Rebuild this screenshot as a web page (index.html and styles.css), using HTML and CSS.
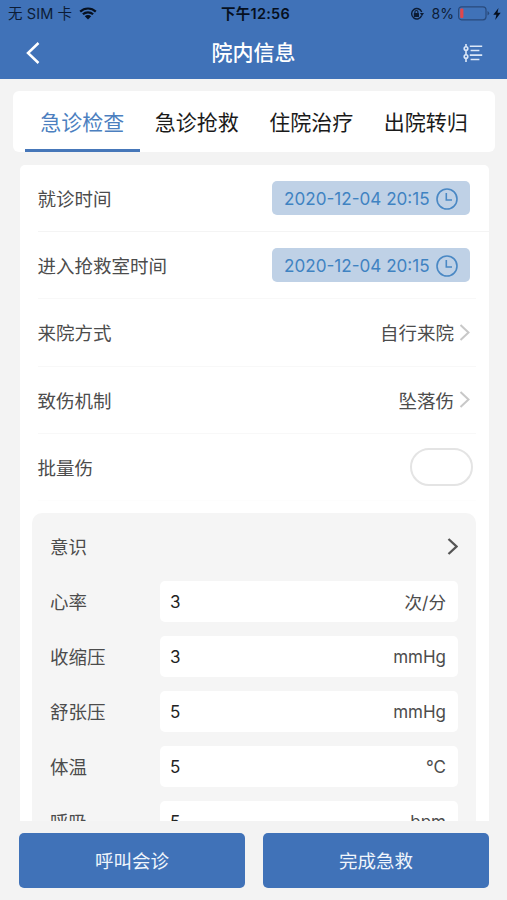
FILE: index.html
```html
<!DOCTYPE html>
<html lang="zh-CN">
<head>
<meta charset="utf-8">
<title>院内信息</title>
<link rel="stylesheet" href="styles.css">
</head>
<body>
<div class="app">
  <header class="header">
    <div class="status">
      <div class="status-left">
        <span>无 SIM 卡</span>
        <svg class="wifi" width="18" height="13" viewBox="0 0 18 13"><path d="M1.2 4.6A11.3 11.3 0 0 1 16.8 4.6M3.9 7.3A7.5 7.5 0 0 1 14.1 7.3" fill="none" stroke="#06101f" stroke-width="2.2"/><path d="M9 12.6L5.8 9.3A4.6 4.6 0 0 1 12.2 9.3Z" fill="#06101f"/></svg>
      </div>
      <div class="status-time">下午12:56</div>
      <div class="status-right">
        <svg width="14" height="14" viewBox="0 0 14 14"><path d="M11.7 8.6A5.2 5.2 0 1 1 11.7 4.9" fill="none" stroke="#0c1c35" stroke-width="1.4"/><path d="M9.9 6.1H14L12 9Z" fill="#0c1c35"/><rect x="3.8" y="6" width="5.2" height="4" rx=".5" fill="#0c1c35"/><path d="M4.9 6V5A1.5 1.5 0 0 1 7.9 5V6" fill="none" stroke="#0c1c35" stroke-width="1.1"/></svg>
        <span class="percent">8%</span>
        <svg class="battery" width="32" height="15" viewBox="0 0 32 15"><rect x=".6" y=".8" width="27.4" height="13" rx="3" fill="none" stroke="#284a7c" stroke-width="1.2"/><rect x="2.2" y="2.5" width="3.2" height="9.6" rx="1" fill="#e0474d"/><path d="M29.5 5v4.5q1.7-.6 1.7-2.2T29.5 5" fill="#284a7c"/></svg>
        <svg width="8" height="12" viewBox="0 0 8 12"><path d="M5.5 0L.3 6.8H3.4L2.2 12L7.7 4.8H4.5Z" fill="#06101f"/></svg>
      </div>
    </div>
    <div class="nav">
      <svg width="14" height="22" viewBox="0 0 14 22"><path d="M12.5 1L2 11L12.5 21" fill="none" stroke="#fff" stroke-width="2.5"/></svg>
      <h1 class="title">院内信息</h1>
      <svg width="20" height="18" viewBox="0 0 20 18"><g fill="none" stroke="#dce8f8" stroke-width="1.6"><path d="M3 0V2.8M3 6.2V10.8M3 14.4V18M6.8 2.2H19.2M7.6 6.5H16.4M6.8 11.1H19.2M7.6 15.5H16.4"/><circle cx="3" cy="4.5" r="1.8"/><circle cx="3" cy="12.6" r="1.8"/></g></svg>
    </div>
  </header>

  <nav class="tabs">
    <div class="tab active">急诊检查</div>
    <div class="tab">急诊抢救</div>
    <div class="tab">住院治疗</div>
    <div class="tab">出院转归</div>
  </nav>

  <main class="card">
    <div class="row strong"><span>就诊时间</span>
      <div class="date"><span>2020-12-04 20:15</span><svg width="22" height="22" viewBox="0 0 22 22"><g fill="none" stroke="#4a88c4" stroke-width="1.6"><circle cx="11" cy="11" r="10"/><path d="M10.3 5V12H16"/></g></svg></div>
    </div>
    <div class="row"><span>进入抢救室时间</span>
      <div class="date"><span>2020-12-04 20:15</span><svg width="22" height="22" viewBox="0 0 22 22"><g fill="none" stroke="#4a88c4" stroke-width="1.6"><circle cx="11" cy="11" r="10"/><path d="M10.3 5V12H16"/></g></svg></div>
    </div>
    <div class="row"><span>来院方式</span>
      <div class="choice"><span>自行来院</span><svg width="11" height="17" viewBox="0 0 11 17"><path d="M1.5 1L9.5 8.5L1.5 16" fill="none" stroke="#c8c8c8" stroke-width="2"/></svg></div>
    </div>
    <div class="row"><span>致伤机制</span>
      <div class="choice"><span>坠落伤</span><svg width="11" height="17" viewBox="0 0 11 17"><path d="M1.5 1L9.5 8.5L1.5 16" fill="none" stroke="#c8c8c8" stroke-width="2"/></svg></div>
    </div>
    <div class="row last"><span>批量伤</span><div class="switch"></div></div>

    <section class="panel">
      <div class="panel-head"><span>意识</span><svg width="11" height="17" viewBox="0 0 11 17"><path d="M1.5 1L9.5 8.5L1.5 16" fill="none" stroke="#555" stroke-width="2.3"/></svg></div>
      <div class="field"><span>心率</span><div class="input"><span>3</span><span class="unit cjk">次/分</span></div></div>
      <div class="field"><span>收缩压</span><div class="input"><span>3</span><span class="unit">mmHg</span></div></div>
      <div class="field"><span>舒张压</span><div class="input"><span>5</span><span class="unit">mmHg</span></div></div>
      <div class="field"><span>体温</span><div class="input"><span>5</span><span class="unit">°C</span></div></div>
      <div class="field"><span>呼吸</span><div class="input"><span>5</span><span class="unit">bpm</span></div></div>
    </section>
  </main>

  <footer class="actions">
    <div class="button">呼叫会诊</div>
    <div class="button">完成急救</div>
  </footer>
</div>
</body>
</html>
```
FILE: styles.css
```css
* { box-sizing: border-box; }

body {
  margin: 0;
  background: #f3f3f3;
  color: #4c4c4c;
  font-family: Inter, "Noto Sans CJK SC", sans-serif;
  font-size: 18.5px;
}

svg { display: block; flex: none; }

.app {
  width: 507px;
  height: 900px;
  display: flex;
  flex-direction: column;
  overflow: hidden;
}

.header {
  flex: none;
  height: 79px;
  background: #4072b8;
}

.status {
  height: 27px;
  padding: 0 6px 0 8px;
  display: grid;
  grid-template-columns: 1fr auto 1fr;
  align-items: center;
  color: #0c1c35;
  font-size: 14.5px;
  line-height: 27px;
}

.status-left,
.status-right { display: flex; align-items: center; }

.status-left { gap: 7px; letter-spacing: .1px; }
.status-right { justify-content: flex-end; }
.status-time { padding-left: 2px; color: #06101f; font-weight: 600; letter-spacing: .25px; }
.percent { margin: 0 4px 0 8px; font-size: 14px; }
.battery { margin-right: 3px; }

.nav {
  height: 52px;
  padding: 0 24px 0 26px;
  display: flex;
  align-items: center;
  justify-content: space-between;
}

.title {
  margin: 0;
  padding-left: 4px;
  color: #fff;
  font-size: 21px;
  font-weight: 500;
  line-height: 30px;
}

.tabs {
  flex: none;
  height: 61px;
  margin: 12px 12px 0 13px;
  padding: 0 12px;
  display: grid;
  grid-template-columns: repeat(4, 1fr);
  background: #fff;
  border-radius: 6px;
}

.tab {
  height: 61px;
  padding-top: 2px;
  color: #1a1a1a;
  font-size: 21px;
  line-height: 59px;
  text-align: center;
}

.tab.active {
  color: #4c7fbf;
  box-shadow: inset 0 -3px #4677b9;
}

.card {
  flex: none;
  height: 656px;
  margin: 13px 18px 0 20px;
  padding: 0 13px 0 12px;
  background: #fff;
  border-radius: 5px 5px 0 0;
  overflow: hidden;
}

.row {
  height: 67.2px;
  margin-left: 5.5px;
  padding-right: 6px;
  display: flex;
  align-items: center;
  justify-content: space-between;
  border-bottom: 1px solid #f8f8f8;
}

.row.strong { border-color: #f4f4f4; margin-right: -13px; padding-right: 19px; }
.row.last { padding-right: 3px; border-color: #fdfdfd; }

.date {
  width: 198px;
  height: 34px;
  padding: 1px 12px 0;
  display: flex;
  align-items: center;
  justify-content: space-between;
  background: #bfd1e6;
  border-radius: 5px;
  color: #3f83c2;
  font-size: 17.1px;
}

.choice { display: flex; align-items: center; gap: 5px; }

.switch {
  width: 63px;
  height: 38px;
  border: 2px solid #e4e4e4;
  border-radius: 19px;
}

.panel {
  height: 340px;
  margin-top: 12px;
  padding: 13px 18px 0;
  background: #f5f5f5;
  border-radius: 10px;
}

.panel-head {
  height: 41px;
  margin-bottom: 14px;
  display: flex;
  align-items: center;
  justify-content: space-between;
}

.field {
  height: 41px;
  margin-bottom: 14px;
  display: grid;
  grid-template-columns: 110px 1fr;
  align-items: center;
}

.input {
  height: 41px;
  padding: 1px 12px 0 10px;
  display: flex;
  align-items: center;
  justify-content: space-between;
  background: #fff;
  border-radius: 5px;
  color: #222;
  font-size: 17px;
}

.unit { color: #4c4c4c; }
.unit.cjk { font-size: 17.6px; }

.actions {
  flex: 1;
  padding: 12px 18px 12px 19px;
  display: grid;
  grid-template-columns: 1fr 1fr;
  gap: 18px;
}

.button {
  padding-top: 1px;
  background: #4072b8;
  border-radius: 5px;
  color: #eff5fc;
  line-height: 54px;
  text-align: center;
}
```
